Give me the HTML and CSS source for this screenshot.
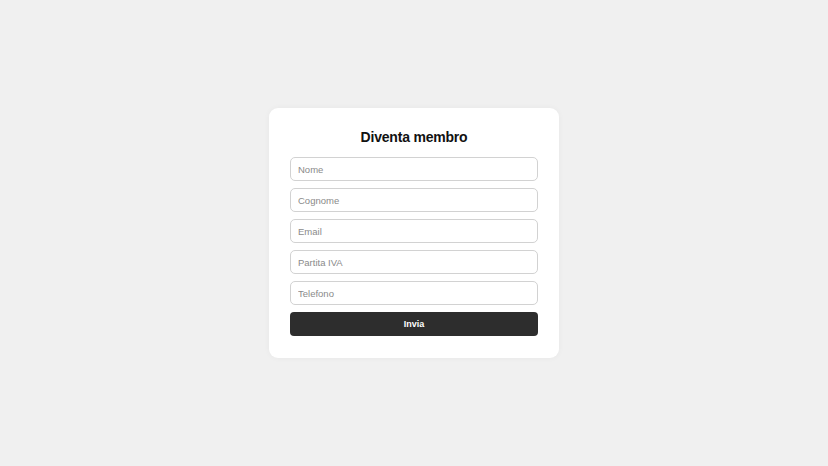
FILE: index.html
```
<!DOCTYPE html>
<html lang="it">
<head>
<meta charset="utf-8">
<title>Diventa membro</title>
<link rel="stylesheet" href="styles.css">
</head>
<body>
<main class="page">
  <form class="card">
    <h2 class="card-title">Diventa membro</h2>
    <input class="field" type="text" placeholder="Nome">
    <input class="field" type="text" placeholder="Cognome">
    <input class="field" type="email" placeholder="Email">
    <input class="field" type="text" placeholder="Partita IVA">
    <input class="field" type="tel" placeholder="Telefono">
    <button class="submit" type="button">Invia</button>
  </form>
</main>
</body>
</html>
```
FILE: styles.css
```
* { box-sizing: border-box; }

html, body {
  margin: 0;
  height: 100%;
}

body {
  background: #f0f0f0;
  font-family: "Liberation Sans", Arial, sans-serif;
}

.page {
  height: 100%;
  display: flex;
  align-items: center;
  justify-content: center;
}

.card {
  width: 290px;
  background: #ffffff;
  border-radius: 9px;
  padding: 20px 21px 22px 21px;
  display: flex;
  flex-direction: column;
  gap: 7px;
  box-shadow: 0 0 6px rgba(0, 0, 0, 0.04);
}

.card-title {
  margin: 0 0 4px;
  font-size: 14px;
  line-height: 18px;
  letter-spacing: -0.2px;
  font-weight: 700;
  text-align: center;
  color: #111;
}

.field {
  height: 24px;
  width: 100%;
  border: 1px solid #d2d2d2;
  border-radius: 5px;
  padding: 0 7px;
  font-family: inherit;
  font-size: 9.5px;
  color: #333;
  background: #fff;
}

.field::placeholder { color: #8a8a8a; }

.submit {
  height: 24px;
  width: 100%;
  border: none;
  border-radius: 4px;
  background: #2d2d2d;
  color: #fff;
  font-family: inherit;
  font-size: 9px;
  font-weight: 700;
}
```
